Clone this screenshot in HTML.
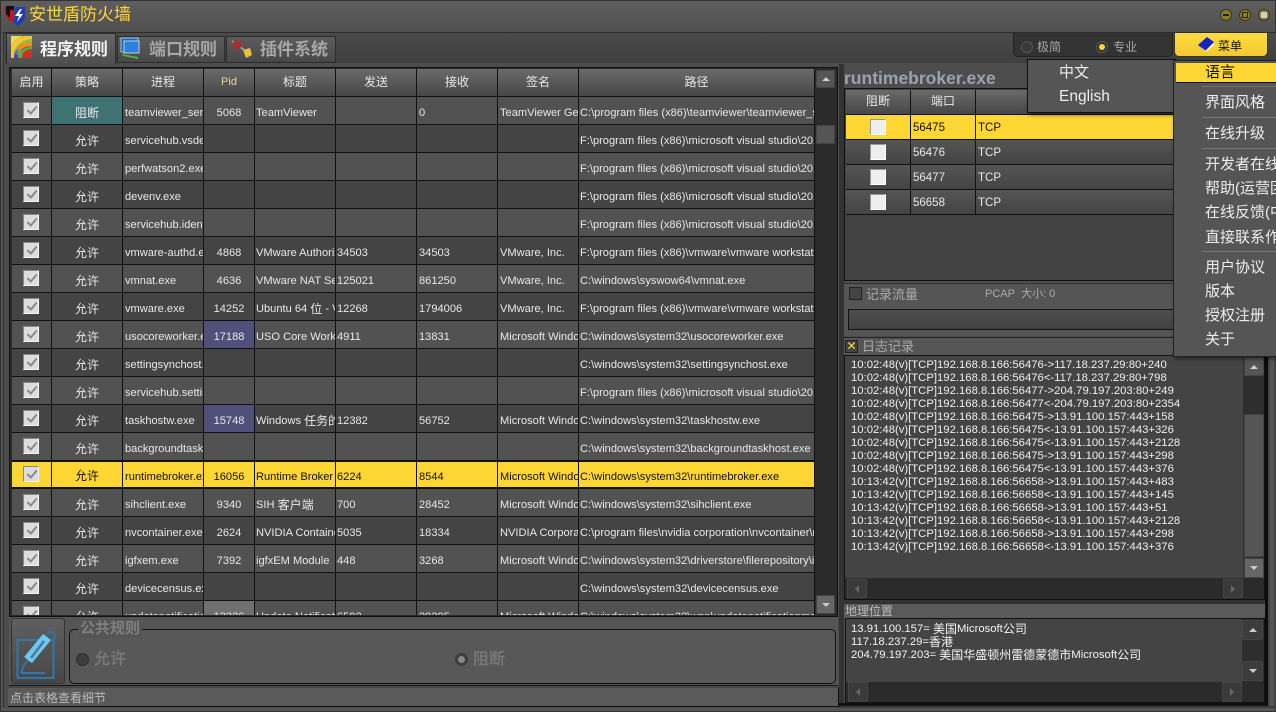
<!DOCTYPE html>
<html><head><meta charset="utf-8"><style>
html,body{margin:0;padding:0;width:1276px;height:712px;overflow:hidden;background:#555}
*{box-sizing:border-box}
body{font-family:"Liberation Sans","WenQuanYi Zen Hei","Noto Sans CJK SC",sans-serif;font-size:12px;color:#e8e8e8;position:relative}
.a{position:absolute;white-space:nowrap}
table{border-collapse:separate;border-spacing:0;table-layout:fixed;position:absolute;left:0;top:0}
td,th{overflow:hidden;white-space:nowrap;padding:5px 0 0 2px;border-right:1px solid #111;border-bottom:1px solid #111;font-weight:normal;font-size:11.1px;height:28px;line-height:22px;text-align:left;vertical-align:top}
td:nth-child(5),td:nth-child(6),td:nth-child(9){padding-left:1px}
td span{font-size:12px;vertical-align:top;line-height:22px}
.g span{font-size:12px;vertical-align:top;line-height:13px}
th{background:linear-gradient(#6a6a6a,#474747);text-align:center;font-size:12px;height:28px;line-height:26px;padding:0}
tr.o td{background:#525252}
tr.e td{background:#444}
tr.s td{background:#ffd735;color:#111;border-top:1px solid #111;border-bottom:2px solid #111;line-height:20px}
td.c{text-align:center;padding-left:0}
td.p{font-size:12px;padding-top:5px;line-height:22px}
tr.s td.p{padding-top:4px;line-height:21px}
td.k{padding:0;position:relative}
.k i{position:absolute;left:11px;top:5px;width:16px;height:16px;background:#dcdcdc;border:1px solid #888;border-right-color:#f4f4f4;border-bottom-color:#f4f4f4}
tr.s .k i{top:4px}
.k i:after{content:"";position:absolute;left:5px;top:1px;width:4px;height:8px;border:solid #8a8a8a;border-width:0 2px 2px 0;transform:rotate(40deg)}
.sb{position:absolute;background:#2b2b2b}
.btn{position:absolute;background:#555;border:1px solid #444}
.up:after,.dn:after{content:"";position:absolute;left:50%;top:50%;margin:-2px 0 0 -4px;border:4px solid transparent}
.up:after{border-bottom-color:#ccc;border-top:0}
.dn:after{border-top-color:#ccc;border-bottom:0}
.lf:after,.rt:after{content:"";position:absolute;left:50%;top:50%;margin:-4px 0 0 -2px;border:4px solid transparent}
.lf:after{border-right-color:#666;border-left:0}
.rt:after{border-left-color:#666;border-right:0}
.m{position:absolute;left:31px;color:#eee;font-size:15px;line-height:20px;white-space:nowrap;margin-top:1px}
.sep{position:absolute;left:28px;right:0;height:1px;background:#777}
#ports td{height:25px;line-height:22px;padding:2px 0 0 2px;font-size:11.5px;background:linear-gradient(#555,#444)}
#ports th{height:25px;line-height:23px}
#ports tr.s td{background:#ffd735;color:#111;border-top:0;border-bottom:1px solid #111}
#ports i{position:absolute;left:24px;top:4px;width:16px;height:16px;background:#eee;border:1px solid #999;border-right-color:#fff;border-bottom-color:#fff}
</style></head><body>

<div class="a" style="left:0;top:0;width:1276px;height:712px;background:linear-gradient(#5e5e5e,#505050 32px,#555 33px);border:1px solid #333"></div>

<svg class="a" style="left:3px;top:4px" width="24" height="24" viewBox="0 0 24 24"><path d="M1 3h10v16l-5-3-4-5z" fill="#c8141c"/><path d="M3 2h8v4H7v8L3 10z" fill="#111"/><path d="M12 3h10v9c0 5-4 8-7 10l-4-3z" fill="#1a3fb0"/><path d="M17 5l-5 7h4l-2 6 6-8h-4l3-5z" fill="#fff"/></svg>
<div class="a" style="left:29px;top:4px;font-size:17px;line-height:22px;color:#ffd735">安世盾防火墙</div>

<div class="a" style="left:1220px;top:9px;width:12px;height:12px;border-radius:50%;background:#8f7f1c;border:1px solid #333"></div>
<div class="a" style="left:1239px;top:9px;width:12px;height:12px;border-radius:50%;background:#8f7f1c;border:1px solid #333"></div>
<div class="a" style="left:1258px;top:9px;width:12px;height:12px;border-radius:50%;background:#8f7f1c;border:1px solid #333"></div>
<div class="a" style="left:1223px;top:14px;width:6px;height:2px;background:#222"></div>
<div class="a" style="left:1242px;top:12px;width:6px;height:6px;border:1px solid #222"></div>
<div class="a" style="left:1261px;top:12px;width:6px;height:6px;background:#ccc"></div>

<!-- outer content frame -->
<div class="a" style="left:3px;top:32px;width:1273px;height:676px;background:#4d4d4d;border-top:1px solid #2c2c2c;border-left:1px solid #333"></div>
<div class="a" style="left:5px;top:33px;width:1271px;height:30px;background:linear-gradient(#4a4a4a,#3f3f3f)"></div>

<!-- tabs -->
<div class="a" style="left:6px;top:33px;width:110px;height:31px;background:linear-gradient(#666,#4f4f4f);border:1px solid #2c2c2c;border-bottom:0"></div>
<svg class="a" style="left:11px;top:36px" width="21" height="22" viewBox="0 0 21 22"><rect width="21" height="22" fill="#c83028" rx="1"/><path d="M0 22V12C0 6 6 2 14 0h7v3C10 4 3 10 3 22z" fill="#f0c838"/><path d="M0 0h13C6 2 0 6 0 12z" fill="#e8e050"/><path d="M3 22C3 12 9 6 21 6v4C13 10 7 14 7 22z" fill="#f09020"/><path d="M3 22C3 10 10 4 21 3v3C9 6 3 12 3 22z" fill="#8cc838"/><path d="M3 22c0-3 0-5 1-7l4-3c-1 3-1 6-1 10z" fill="#4080c8"/><path d="M3 22c0-2 0-3 1-4l3 1v3z" fill="#7030a0"/><path d="M7 22c0-6 4-10 14-12v3C13 14 11 17 11 22z" fill="#48b840"/><path d="M11 22c0-4 3-8 10-9v9z" fill="#c83028"/></svg>
<div class="a" style="left:40px;top:39px;font-size:17px;font-weight:bold;line-height:22px;color:#f2f2f2">程序规则</div>
<div class="a" style="left:117px;top:36px;width:108px;height:27px;background:linear-gradient(#5c5c5c,#484848);border:1px solid #2c2c2c"></div>
<svg class="a" style="left:119px;top:36px" width="24" height="24" viewBox="0 0 24 24"><rect x="2" y="2" width="17" height="14" fill="#1b62c8" stroke="#9cc" stroke-width="1"/><rect x="5" y="5" width="15" height="12" fill="#2c80e0" stroke="#ccd"/><path d="M3 18l16 3v2L4 20z" fill="#4ab838"/></svg>
<div class="a" style="left:149px;top:39px;font-size:17px;font-weight:bold;line-height:22px;color:#a8a8a8">端口规则</div>
<div class="a" style="left:226px;top:36px;width:110px;height:27px;background:linear-gradient(#5c5c5c,#484848);border:1px solid #2c2c2c"></div>
<svg class="a" style="left:230px;top:37px" width="24" height="22" viewBox="0 0 24 22"><path d="M2 4l19 14" stroke="#999" stroke-width="2"/><circle cx="7" cy="8" r="4.5" fill="#a83030"/><path d="M13 13l7-2 2 7-6 3z" fill="#e8c040"/></svg>
<div class="a" style="left:260px;top:39px;font-size:17px;font-weight:bold;line-height:22px;color:#a8a8a8">插件系统</div>

<!-- mode + menu button -->
<div class="a" style="left:1013px;top:33px;width:160px;height:24px;background:#333;border:1px solid #222;border-top:0;border-radius:0 0 5px 5px"></div>
<div class="a" style="left:1021px;top:41px;width:12px;height:12px;border-radius:50%;background:#3a3a3a;border:1px solid #555"></div>
<div class="a" style="left:1037px;top:39px;font-size:12px;line-height:16px;color:#aaa">极简</div>
<div class="a" style="left:1096px;top:41px;width:12px;height:12px;border-radius:50%;background:#333;border:1px solid #555"></div>
<div class="a" style="left:1099px;top:44px;width:6px;height:6px;border-radius:50%;background:#ffd735"></div>
<div class="a" style="left:1113px;top:39px;font-size:12px;line-height:16px;color:#aaa">专业</div>
<div class="a" style="left:1174px;top:33px;width:94px;height:24px;background:linear-gradient(#ffdc40,#f2ca30);border-radius:0 0 5px 5px;border:1px solid #333;border-top:0"></div>
<svg class="a" style="left:1198px;top:37px" width="17" height="15" viewBox="0 0 17 15"><path d="M0 8l9-8 7 5-9 9z" fill="#1622c0"/><path d="M2 9l6 5 8-8v2l-8 7z" fill="#fff"/></svg>
<div class="a" style="left:1218px;top:38px;font-size:12px;line-height:16px;color:#111">菜单</div>

<!-- left panel -->
<div class="a" style="left:9px;top:67px;width:829px;height:550px;background:#2b2b2b;border:1px solid #111"></div>
<div class="a" style="left:12px;top:69px;width:803px;height:546px;overflow:hidden;background:#444">
<table style="width:803px">
<colgroup><col style="width:40px"><col style="width:71px"><col style="width:81px"><col style="width:51px"><col style="width:81px"><col style="width:81px"><col style="width:81px"><col style="width:81px"><col style="width:236px"></colgroup>
<tr><th>启用</th><th>策略</th><th>进程</th><th style="color:#e8d890;font-size:11px">Pid</th><th>标题</th><th>发送</th><th>接收</th><th>签名</th><th>路径</th></tr>
<tr class="o"><td class="k"><i></i></td><td class="c p" style="background:#3f7272">阻断</td><td>teamviewer_service.exe</td><td class="c">5068</td><td>TeamViewer</td><td></td><td>0</td><td>TeamViewer Germany</td><td>C:\program files (x86)\teamviewer\teamviewer_service.exe</td></tr>
<tr class="e"><td class="k"><i></i></td><td class="c p">允许</td><td>servicehub.vsdebug.exe</td><td></td><td></td><td></td><td></td><td></td><td>F:\program files (x86)\microsoft visual studio\2017\enterprise</td></tr>
<tr class="o"><td class="k"><i></i></td><td class="c p">允许</td><td>perfwatson2.exe</td><td></td><td></td><td></td><td></td><td></td><td>F:\program files (x86)\microsoft visual studio\2017\enterprise</td></tr>
<tr class="e"><td class="k"><i></i></td><td class="c p">允许</td><td>devenv.exe</td><td></td><td></td><td></td><td></td><td></td><td>F:\program files (x86)\microsoft visual studio\2017\enterprise</td></tr>
<tr class="o"><td class="k"><i></i></td><td class="c p">允许</td><td>servicehub.identity.exe</td><td></td><td></td><td></td><td></td><td></td><td>F:\program files (x86)\microsoft visual studio\2017\enterprise</td></tr>
<tr class="e"><td class="k"><i></i></td><td class="c p">允许</td><td>vmware-authd.exe</td><td class="c">4868</td><td>VMware Authorization</td><td>34503</td><td>34503</td><td>VMware, Inc.</td><td>F:\program files (x86)\vmware\vmware workstation\vmware</td></tr>
<tr class="o"><td class="k"><i></i></td><td class="c p">允许</td><td>vmnat.exe</td><td class="c">4636</td><td>VMware NAT Service</td><td>125021</td><td>861250</td><td>VMware, Inc.</td><td>C:\windows\syswow64\vmnat.exe</td></tr>
<tr class="e"><td class="k"><i></i></td><td class="c p">允许</td><td>vmware.exe</td><td class="c">14252</td><td>Ubuntu 64 <span>位</span> - VMware</td><td>12268</td><td>1794006</td><td>VMware, Inc.</td><td>F:\program files (x86)\vmware\vmware workstation\vmware</td></tr>
<tr class="o"><td class="k"><i></i></td><td class="c p">允许</td><td>usocoreworker.exe</td><td class="c" style="background:#50507a">17188</td><td>USO Core Worker</td><td>4911</td><td>13831</td><td>Microsoft Windows</td><td>C:\windows\system32\usocoreworker.exe</td></tr>
<tr class="e"><td class="k"><i></i></td><td class="c p">允许</td><td>settingsynchost.exe</td><td></td><td></td><td></td><td></td><td></td><td>C:\windows\system32\settingsynchost.exe</td></tr>
<tr class="o"><td class="k"><i></i></td><td class="c p">允许</td><td>servicehub.settings.exe</td><td></td><td></td><td></td><td></td><td></td><td>F:\program files (x86)\microsoft visual studio\2017\enterprise</td></tr>
<tr class="e"><td class="k"><i></i></td><td class="c p">允许</td><td>taskhostw.exe</td><td class="c" style="background:#50507a">15748</td><td>Windows <span>任务的主机</span></td><td>12382</td><td>56752</td><td>Microsoft Windows</td><td>C:\windows\system32\taskhostw.exe</td></tr>
<tr class="o"><td class="k"><i></i></td><td class="c p">允许</td><td>backgroundtaskhost.exe</td><td></td><td></td><td></td><td></td><td></td><td>C:\windows\system32\backgroundtaskhost.exe</td></tr>
<tr class="s"><td class="k"><i></i></td><td class="c p">允许</td><td>runtimebroker.exe</td><td class="c">16056</td><td>Runtime Broker</td><td>6224</td><td>8544</td><td>Microsoft Windows</td><td>C:\windows\system32\runtimebroker.exe</td></tr>
<tr class="o"><td class="k"><i></i></td><td class="c p">允许</td><td>sihclient.exe</td><td class="c">9340</td><td>SIH <span>客户端</span></td><td>700</td><td>28452</td><td>Microsoft Windows</td><td>C:\windows\system32\sihclient.exe</td></tr>
<tr class="e"><td class="k"><i></i></td><td class="c p">允许</td><td>nvcontainer.exe</td><td class="c">2624</td><td>NVIDIA Container</td><td>5035</td><td>18334</td><td>NVIDIA Corporation</td><td>C:\program files\nvidia corporation\nvcontainer\nvcontainer.exe</td></tr>
<tr class="o"><td class="k"><i></i></td><td class="c p">允许</td><td>igfxem.exe</td><td class="c">7392</td><td>igfxEM Module</td><td>448</td><td>3268</td><td>Microsoft Windows</td><td>C:\windows\system32\driverstore\filerepository\igdlh64.inf</td></tr>
<tr class="e"><td class="k"><i></i></td><td class="c p">允许</td><td>devicecensus.exe</td><td></td><td></td><td></td><td></td><td></td><td>C:\windows\system32\devicecensus.exe</td></tr>
<tr class="o"><td class="k"><i></i></td><td class="c p">允许</td><td>updatenotificationmgr.exe</td><td class="c" style="background:#707070">13336</td><td>Update Notification</td><td>6592</td><td>29295</td><td>Microsoft Windows</td><td>C:\windows\system32\wpp\updatenotificationmgr.exe</td></tr>
</table>
</div>
<div class="sb" style="left:815px;top:69px;width:21px;height:546px"></div>
<div class="btn up" style="left:816px;top:70px;width:19px;height:18px"></div>
<div class="btn" style="left:816px;top:125px;width:19px;height:19px"></div>
<div class="btn dn" style="left:816px;top:595px;width:19px;height:19px;background:#666"></div>

<!-- public rule -->
<div class="a" style="left:9px;top:617px;width:829px;height:69px;background:#555;border-bottom:1px solid #111"></div>
<div class="a" style="left:11px;top:618px;width:54px;height:66px;background:linear-gradient(#5f5f5f,#474747);border:1px solid #333;border-radius:3px"></div>
<svg class="a" style="left:14px;top:628px" width="44" height="52" viewBox="0 0 44 52"><path d="M3.500 12h36v38h-36z" fill="none" stroke="#2f78ae" stroke-width="2"/><path d="M7 45l3-8 24-28" fill="none" stroke="#2f78ae" stroke-width="2"/><path d="M7 45h24" stroke="#2f78ae" stroke-width="2"/><path d="M14 32L33 9" stroke="#6cc8f0" stroke-width="10"/><path d="M17 30L30 13" stroke="#4a7c98" stroke-width="2.500"/><path d="M33 5c4-3 8 0 8 4l-3 4" fill="none" stroke="#2f78ae" stroke-width="2"/></svg>
<div class="a" style="left:69px;top:629px;width:767px;height:55px;border:1px solid #111;border-radius:5px;background:#585858"></div>
<div class="a" style="left:78px;top:620px;padding:0 2px;background:#555;font-size:15px;line-height:18px;color:#7f7f7f;font-weight:bold">公共规则</div>
<div class="a" style="left:76px;top:653px;width:13px;height:13px;border-radius:50%;background:#3d3d3d;border:1px solid #2c2c2c"></div>
<div class="a" style="left:94px;top:651px;font-size:16px;line-height:18px;font-weight:bold;color:#767676">允许</div>
<div class="a" style="left:455px;top:653px;width:13px;height:13px;border-radius:50%;background:#888;border:3px solid #3d3d3d"></div>
<div class="a" style="left:473px;top:651px;font-size:16px;line-height:18px;font-weight:bold;color:#767676">阻断</div>

<!-- status -->
<div class="a" style="left:8px;top:687px;width:831px;height:20px;background:#5a5a5a;border-bottom:1px solid #111;border-right:1px solid #111;border-top:1px solid #444"></div>
<div class="a" style="left:10px;top:691px;font-size:12px;line-height:15px;color:#bbb">点击表格查看细节</div>

<!-- right panel -->
<div class="a" style="left:839px;top:64px;width:5px;height:644px;background:#333"></div>
<div class="a" style="left:844px;top:68px;font-size:17.500px;font-weight:bold;line-height:20px;color:#9aa3ad">runtimebroker.exe</div>
<div class="a" style="left:844px;top:88px;width:432px;height:193px;background:#424242;border:1px solid #111;overflow:hidden">
<table id="ports" style="left:1px;top:1px;width:500px">
<colgroup><col style="width:65px"><col style="width:65px"><col style="width:370px"></colgroup>
<tr><th>阻断</th><th>端口</th><th></th></tr>
<tr class="s"><td style="position:relative"><i></i></td><td>56475</td><td>TCP</td></tr>
<tr><td style="position:relative"><i></i></td><td>56476</td><td>TCP</td></tr>
<tr><td style="position:relative"><i></i></td><td>56477</td><td>TCP</td></tr>
<tr><td style="position:relative"><i></i></td><td>56658</td><td>TCP</td></tr>
</table>
</div>
<div class="a" style="left:844px;top:283px;width:432px;height:53px;background:#555;border-top:1px solid #333"></div>
<div class="a" style="left:849px;top:287px;width:13px;height:13px;background:#444;border:1px solid #222"></div>
<div class="a" style="left:866px;top:287px;font-size:13px;line-height:15px;color:#aaa">记录流量</div>
<div class="a" style="left:985px;top:287px;font-size:11px;line-height:14px;color:#aaa">PCAP&nbsp;&nbsp;大小: 0</div>
<div class="a" style="left:848px;top:309px;width:330px;height:21px;background:linear-gradient(#4e4e4e,#424242);border:1px solid #111"></div>
<div class="a" style="left:844px;top:337px;width:432px;height:18px;background:#565656;border-top:1px solid #222"></div>
<div class="a" style="left:845px;top:340px;width:13px;height:13px;background:#444;border:1px solid #222;color:#ffd735;font-size:12px;line-height:11px;text-align:center">✕</div>
<div class="a" style="left:862px;top:339px;font-size:13px;line-height:15px;color:#aaa">日志记录</div>
<div class="a" style="left:844px;top:355px;width:421px;height:245px;background:#444;border:1px solid #111"></div>
<div class="a" style="left:851px;top:359px;font-size:11.300px;line-height:13px;color:#f0f0f0;white-space:pre">10:02:48(v)[TCP]192.168.8.166:56476-&gt;117.18.237.29:80+240
10:02:48(v)[TCP]192.168.8.166:56476&lt;-117.18.237.29:80+798
10:02:48(v)[TCP]192.168.8.166:56477-&gt;204.79.197.203:80+249
10:02:48(v)[TCP]192.168.8.166:56477&lt;-204.79.197.203:80+2354
10:02:48(v)[TCP]192.168.8.166:56475-&gt;13.91.100.157:443+158
10:02:48(v)[TCP]192.168.8.166:56475&lt;-13.91.100.157:443+326
10:02:48(v)[TCP]192.168.8.166:56475&lt;-13.91.100.157:443+2128
10:02:48(v)[TCP]192.168.8.166:56475-&gt;13.91.100.157:443+298
10:02:48(v)[TCP]192.168.8.166:56475&lt;-13.91.100.157:443+376
10:13:42(v)[TCP]192.168.8.166:56658-&gt;13.91.100.157:443+483
10:13:42(v)[TCP]192.168.8.166:56658&lt;-13.91.100.157:443+145
10:13:42(v)[TCP]192.168.8.166:56658-&gt;13.91.100.157:443+51
10:13:42(v)[TCP]192.168.8.166:56658&lt;-13.91.100.157:443+2128
10:13:42(v)[TCP]192.168.8.166:56658-&gt;13.91.100.157:443+298
10:13:42(v)[TCP]192.168.8.166:56658&lt;-13.91.100.157:443+376</div>
<div class="sb" style="left:1243px;top:356px;width:21px;height:243px;background:#2e2e2e"></div>
<div class="btn up" style="left:1244px;top:357px;width:20px;height:19px"></div>
<div class="btn" style="left:1244px;top:414px;width:20px;height:143px"></div>
<div class="btn dn" style="left:1244px;top:558px;width:20px;height:20px;background:#666"></div>
<div class="sb" style="left:845px;top:578px;width:419px;height:21px"></div>
<div class="btn lf" style="left:847px;top:579px;width:20px;height:19px;background:#3a3a3a"></div>
<div class="btn rt" style="left:1223px;top:579px;width:20px;height:19px;background:#3a3a3a"></div>
<div class="a" style="left:844px;top:600px;width:426px;height:4px;background:#333"></div>
<div class="a" style="left:844px;top:604px;width:424px;height:15px;background:#5a5a5a"></div>
<div class="a" style="left:845px;top:604px;font-size:12px;line-height:15px;color:#bbb">地理位置</div>
<div class="a" style="left:845px;top:618px;width:420px;height:85px;background:#444;border:1px solid #111"></div>
<div class="a g" style="left:851px;top:623px;font-size:11.300px;line-height:13px;color:#f4f4f4;white-space:pre">13.91.100.157= <span>美国</span>Microsoft<span>公司</span>
117.18.237.29=<span>香港</span>
204.79.197.203= <span>美国华盛顿州雷德蒙德市</span>Microsoft<span>公司</span></div>
<div class="sb" style="left:1242px;top:619px;width:22px;height:63px;background:#2e2e2e"></div>
<div class="btn up" style="left:1242px;top:620px;width:21px;height:20px;background:#3c3c3c"></div>
<div class="btn dn" style="left:1242px;top:661px;width:21px;height:20px;background:#3c3c3c"></div>
<div class="sb" style="left:846px;top:682px;width:418px;height:20px"></div>
<div class="btn lf" style="left:848px;top:682px;width:20px;height:20px;background:#3a3a3a"></div>
<div class="btn rt" style="left:1222px;top:682px;width:20px;height:20px;background:#3a3a3a"></div>
<div class="a" style="left:839px;top:703px;width:429px;height:3px;background:#111"></div>
<div class="a" style="left:1265px;top:340px;width:3px;height:366px;background:#0c0c0c"></div>
<div class="a" style="left:1268px;top:340px;width:8px;height:368px;background:#555;border-left:2px solid #444;border-right:2px solid #444"></div>
<div class="a" style="left:839px;top:706px;width:437px;height:2px;background:#3a3a3a"></div>

<!-- sub menu -->
<div class="a" style="left:1027px;top:59px;width:149px;height:54px;background:#555;border:1px solid #111;box-shadow:2px 2px 4px rgba(0,0,0,.5)"></div>
<div class="a" style="left:1059px;top:63px;font-size:15px;line-height:19px;color:#eee">中文</div>
<div class="a" style="left:1059px;top:87px;font-size:15.500px;line-height:19px;color:#eee">English</div>

<!-- main menu -->
<div class="a" style="left:1173px;top:60px;width:103px;height:297px;background:#555;border:1px solid #222;border-right:0;box-shadow:2px 2px 4px rgba(0,0,0,.5);overflow:hidden">
<div style="position:absolute;left:2px;top:2px;right:0;height:20px;background:#ffd735;border-bottom:1px solid #111"></div>
<div class="m" style="top:1px;color:#111">语言</div>
<div class="sep" style="top:25px"></div>
<div class="m" style="top:31px">界面风格</div>
<div class="sep" style="top:56px"></div>
<div class="m" style="top:62px">在线升级</div>
<div class="sep" style="top:87px"></div>
<div class="m" style="top:93px">开发者在线</div>
<div class="m" style="top:117px">帮助(运营团队)</div>
<div class="m" style="top:141px">在线反馈(中文)</div>
<div class="m" style="top:166px">直接联系作者</div>
<div class="sep" style="top:190px"></div>
<div class="m" style="top:196px">用户协议</div>
<div class="m" style="top:220px">版本</div>
<div class="m" style="top:244px">授权注册</div>
<div class="m" style="top:268px">关于</div>
</div>
</body></html>
